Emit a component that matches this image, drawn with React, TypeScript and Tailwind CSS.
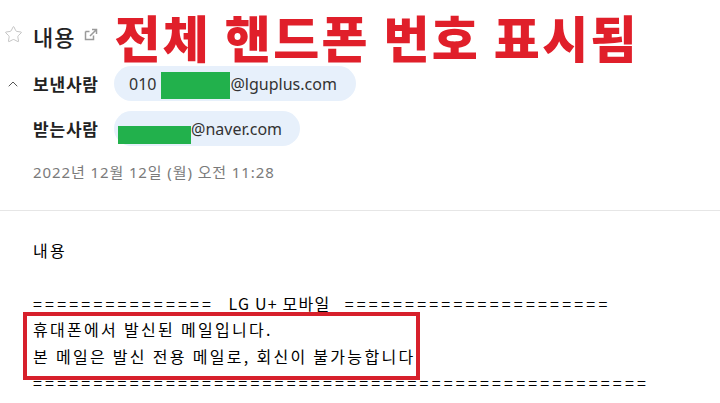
import { Star, ChevronUp } from 'lucide-react'

function PopoutIcon() {
  return (
    <svg width="14" height="13" viewBox="0 0 14 13" fill="none">
      <path d="M1.5 3.5h4M1.5 3.5v8h8v-4" stroke="#9a9a9a" strokeWidth="1.5" />
      <path d="M6 8L12 2M8 1.5h4.5V6" stroke="#9a9a9a" strokeWidth="1.5" />
    </svg>
  )
}

function Pill({ children }: { children: React.ReactNode }) {
  return (
    <div className="flex h-[35px] items-center rounded-full bg-[#e7f0fb] px-[4px] text-[16px] text-[#333]">
      {children}
    </div>
  )
}

const eq = (n: number) => '='.repeat(n)

export default function App() {
  return (
    <div className="relative h-[403px] w-[720px] overflow-hidden bg-white font-['Noto_Sans','Noto_Sans_CJK_KR',sans-serif] text-[#222]">
      {/* header */}
      <div className="pt-[9px]">
        <div className="flex h-[54px] items-center">
          <Star size={19} strokeWidth={1} className="ml-[4px] mt-[-4px] text-[#b5b5b5]" />
          <span className="ml-[10px] text-[22px] font-medium leading-none tracking-[1px] text-[#222] font-['Noto_Sans_CJK_KR',sans-serif]">내용</span>
          <span className="ml-[9px] mt-[-4px]"><PopoutIcon /></span>
          <span className="ml-[16px] text-[50px] font-black leading-none tracking-[2.3px] text-[#e01f2a] font-['Noto_Sans_CJK_KR',sans-serif]">
            전체 핸드폰 번호 표시됨
          </span>
        </div>

        <div className="mt-[3px] flex items-center">
          <ChevronUp size={16} strokeWidth={1.5} className="ml-[5px] text-[#555]" />
          <span className="ml-[12px] w-[81px] text-[17px] font-bold tracking-[0.8px] text-[#222] font-['Noto_Sans_CJK_KR',sans-serif]">보낸사람</span>
          <Pill>
            <span className="ml-[11px]">010</span>
            <span className="ml-[5px] mt-[4px] h-[27px] w-[69px] bg-[#22b14c]" />
            <span className="mr-[15px]">@lguplus.com</span>
          </Pill>
        </div>

        <div className="mt-[10px] flex items-center">
          <span className="ml-[33px] w-[81px] text-[17px] font-bold tracking-[0.8px] text-[#222] font-['Noto_Sans_CJK_KR',sans-serif]">받는사람</span>
          <Pill>
            <span className="mt-[12px] h-[18px] w-[73px] bg-[#22b14c]" />
            <span className="mr-[14px]">@naver.com</span>
          </Pill>
        </div>

        <div className="ml-[33px] mt-[15px] text-[15px] tracking-[0.9px] text-[#7a7a7a]">2022년 12월 12일 (월) 오전 11:28</div>
      </div>

      <div className="mt-[26px] h-px w-full bg-[#e6e6e6]" />

      {/* body */}
      <div className="relative pl-[33px] pt-[26px] text-[16px] leading-[26.5px] tracking-[2.3px] text-black font-['Noto_Sans_CJK_KR',sans-serif]">
        <div>내용</div>
        <div>&nbsp;</div>
        <div className="whitespace-pre">
          <span className="tracking-[3.2px]">{eq(15)}</span>
          <span className="tracking-[1.2px]">   LG U+ 모바일   </span>
          <span className="tracking-[3.2px]">{eq(22)}</span>
        </div>
        <div>휴대폰에서 발신된 메일입니다.</div>
        <div>본 메일은 발신 전용 메일로, 회신이 불가능합니다</div>
        <div className="tracking-[3.2px]">{eq(51)}</div>

        <div className="absolute left-[23px] top-[101px] h-[68px] w-[397px] border-[4px] border-[#d7202b]" />
      </div>
    </div>
  )
}
